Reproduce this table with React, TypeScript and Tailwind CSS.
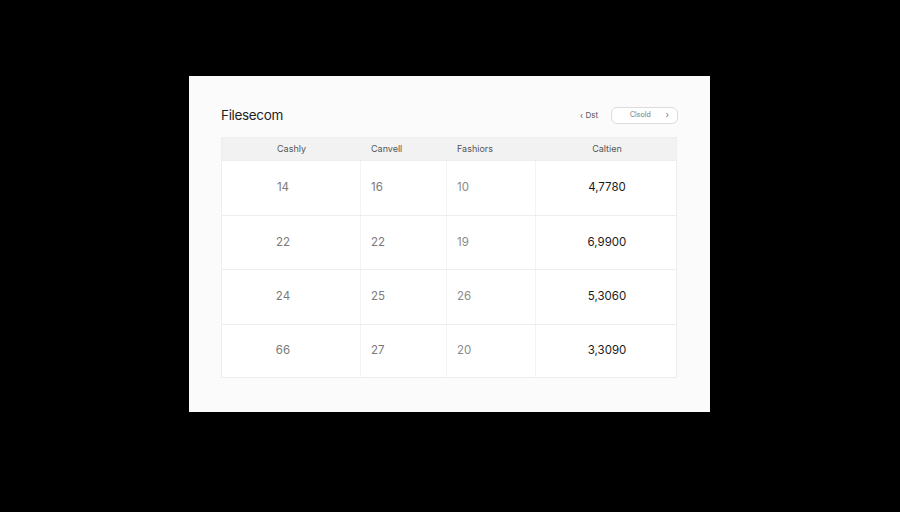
import React from 'react';

const rows = [
  { a: '14', b: '16', c: '10', total: '4,7780', h: 'h-[55px]' },
  { a: '22', b: '22', c: '19', total: '6,9900', h: 'h-[54px]' },
  { a: '24', b: '25', c: '26', total: '5,3060', h: 'h-[55px]' },
  { a: '66', b: '27', c: '20', total: '3,3090', h: 'h-[53px]' },
];

const font = { fontFamily: 'Inter, "Liberation Sans", sans-serif' };

export default function App() {
  return (
    <div className="w-[900px] h-[512px] bg-black pl-[189px] pt-[76px]" style={font}>
      <div className="w-[521px] h-[336px] bg-[#fbfbfb] px-[32px] pt-[28px]">
        <div className="flex items-center justify-between h-[22px]">
          <span className="text-[13.5px] font-normal text-[#1e1e1e] tracking-tight">Filesecom</span>
          <div className="flex items-center gap-[13px]">
            <span className="text-[8px] text-[#555]">‹ Dst</span>
            <button className="w-[67px] h-[17px] border border-[#dcdcdc] rounded-md bg-white flex items-center justify-between pl-[18px] pr-[8px] text-[7px] text-[#777]">
              <span>Clsold</span>
              <span className="text-[9px]">›</span>
            </button>
          </div>
        </div>

        <div className="mt-[11px] w-[456px] border border-[#eeeeee]">
          <div className="grid grid-cols-[139px_86px_89px_142px] h-[22px] bg-[#f2f2f2] text-[9px] text-[#555] items-center">
            <span className="text-center">Cashly</span>
            <span className="pl-[10px]">Canvell</span>
            <span className="pl-[10px]">Fashiors</span>
            <span className="text-center">Caltien</span>
          </div>
          {rows.map((r, i) => (
            <div
              key={i}
              className={`grid grid-cols-[139px_86px_89px_142px] ${r.h} bg-white border-t border-[#eeeeee] text-[11.5px]`}
            >
              <span className="flex items-center justify-center pr-[16px] text-[#7a7a7a] border-r border-[#f3f3f3]">{r.a}</span>
              <span className="flex items-center pl-[10px] text-[#7a7a7a] border-r border-[#f3f3f3]">{r.b}</span>
              <span className="flex items-center pl-[10px] text-[#8a8a8a] border-r border-[#f3f3f3]">{r.c}</span>
              <span className="flex items-center justify-center text-[#1a1a1a]">{r.total}</span>
            </div>
          ))}
        </div>
      </div>
    </div>
  );
}
